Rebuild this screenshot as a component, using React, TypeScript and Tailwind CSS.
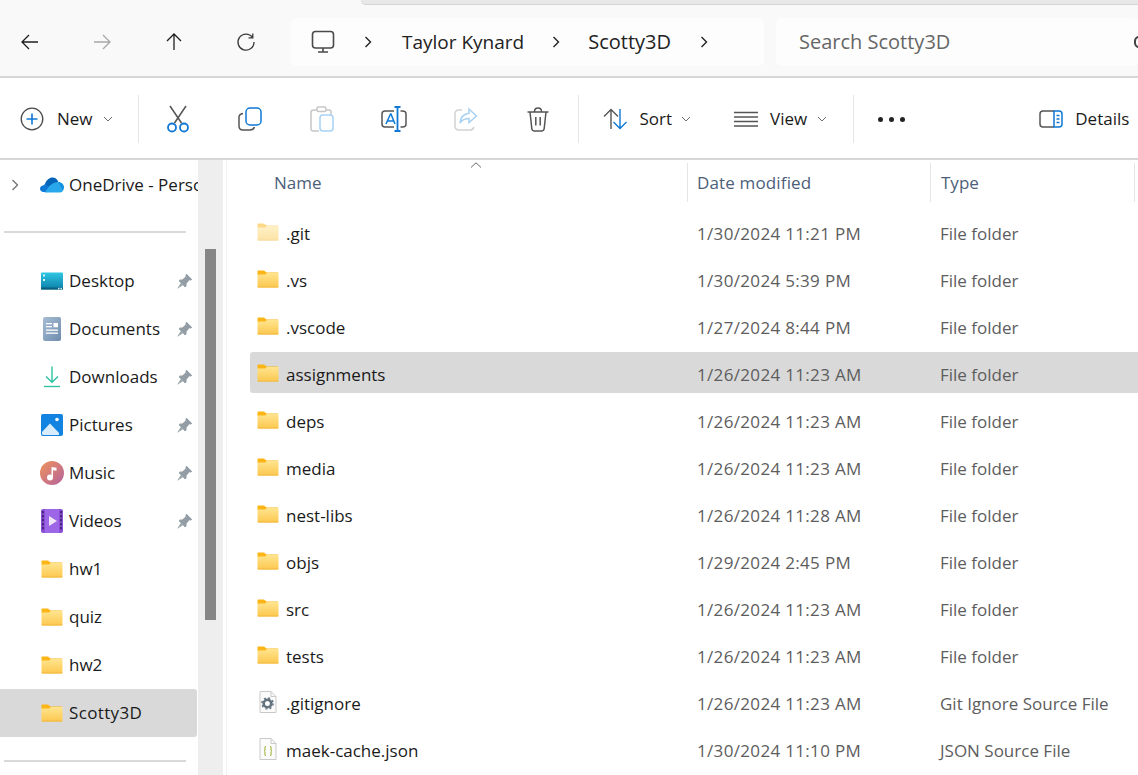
import { ReactNode } from "react";

const font = { fontFamily: '"Open Sans", "Noto Sans", sans-serif' };

const FolderIcon = ({ faded }: { faded?: boolean }) => (
  <svg width="22" height="18" viewBox="0 0 22 18" className={faded ? "shrink-0 opacity-50" : "shrink-0"}>
    <defs>
      <linearGradient id="folderBody" x1="0" y1="0" x2="0" y2="1">
        <stop offset="0" stopColor="#ffe48f" />
        <stop offset="1" stopColor="#fcc84f" />
      </linearGradient>
    </defs>
    <path d="M0.5 1.5C0.5 0.9 0.9 0.5 1.5 0.5H7L9.5 2.5H21V5H0.5Z" fill="#fbb516" />
    <path d="M0.5 4.5L8 4.5L10 3H21.5V16.5C21.5 17 21 17.5 20.5 17.5H1.5C1 17.5 0.5 17 0.5 16.5Z" fill="url(#folderBody)" />
    <path d="M0.5 16.5H21.5V17C21.5 17.3 21.2 17.5 21 17.5H1C0.8 17.5 0.5 17.3 0.5 17Z" fill="#f3b73e" />
  </svg>
);

const PinIcon = () => (
  <svg width="17" height="17" viewBox="0 0 17 17" className="shrink-0">
    <path d="M10.5 0.8L16.2 6.5L14.8 7.6L13.4 7.3L10.6 10.6L10.4 13.4L8.9 14.2L2.8 8.1L3.7 6.6L6.4 6.4L9.7 3.6L9.4 2.2Z" fill="#929da5" />
    <path d="M5 10L1 16L7 12Z" fill="#929da5" />
  </svg>
);

const DesktopIcon = () => (
  <svg width="22" height="18" viewBox="0 0 22 18">
    <defs>
      <linearGradient id="deskFill" x1="0" y1="0" x2="0" y2="1">
        <stop offset="0" stopColor="#2fc6e2" />
        <stop offset="1" stopColor="#0c7fa8" />
      </linearGradient>
    </defs>
    <rect x="0" y="0.5" width="22" height="17" rx="1" fill="url(#deskFill)" />
    <rect x="0" y="15.5" width="22" height="2" fill="#0b5f80" />
    <rect x="2" y="2.5" width="2" height="2" fill="#d6f6fb" />
    <rect x="2" y="7" width="2" height="2" fill="#d6f6fb" />
    <rect x="17" y="15.8" width="1.5" height="1.5" fill="#cfeef6" />
    <rect x="19.5" y="15.8" width="1.5" height="1.5" fill="#cfeef6" />
  </svg>
);

const DocumentsIcon = () => (
  <svg width="18" height="24" viewBox="0 0 18 24">
    <defs>
      <linearGradient id="docFill" x1="0" y1="0" x2="1" y2="1">
        <stop offset="0" stopColor="#a9bdd3" />
        <stop offset="1" stopColor="#6d8cae" />
      </linearGradient>
    </defs>
    <rect x="0" y="0" width="18" height="24" rx="2" fill="url(#docFill)" />
    <rect x="3" y="6" width="6" height="1.3" fill="#fff" />
    <rect x="3" y="9" width="6" height="1.3" fill="#fff" />
    <rect x="10.5" y="6" width="4.5" height="4.3" fill="#fff" />
    <rect x="3" y="12.5" width="12" height="1.3" fill="#fff" />
    <rect x="3" y="15.5" width="12" height="1.3" fill="#fff" />
  </svg>
);

const DownloadsIcon = () => (
  <svg width="18" height="22" viewBox="0 0 18 22" fill="none" stroke="#2fc3a2" strokeWidth="1.4">
    <path d="M9 0.5V16M3 10.5L9 16.3L15 10.5" />
    <path d="M1 20.5H17" />
  </svg>
);

const PicturesIcon = () => (
  <svg width="22" height="22" viewBox="0 0 22 22">
    <rect width="22" height="22" rx="2" fill="#1283e0" />
    <circle cx="16" cy="5.5" r="1.8" fill="#fff" />
    <path d="M1 20V18L9 9.5L18 19V21H2Z" fill="#d9ecfb" />
  </svg>
);

const MusicIcon = () => (
  <svg width="24" height="24" viewBox="0 0 24 24">
    <defs>
      <linearGradient id="musicFill" x1="0" y1="0" x2="1" y2="1">
        <stop offset="0" stopColor="#f0935a" />
        <stop offset="1" stopColor="#b4629e" />
      </linearGradient>
    </defs>
    <circle cx="12" cy="12" r="12" fill="url(#musicFill)" />
    <circle cx="10" cy="16.5" r="3" fill="#fff" />
    <path d="M11.5 16.5V6L16.5 6.8V9.8L13 9.3V16.5Z" fill="#fff" />
  </svg>
);

const VideosIcon = () => (
  <svg width="22" height="24" viewBox="0 0 22 24">
    <rect width="22" height="24" rx="2" fill="#8b4fd8" />
    <rect x="4" width="14" height="24" fill="#9d66e6" />
    {[2, 6, 10, 14, 18].map((y) => (
      <g key={y}>
        <rect x="1" y={y} width="2" height="2.4" fill="#44267a" />
        <rect x="19" y={y} width="2" height="2.4" fill="#44267a" />
      </g>
    ))}
    <path d="M8 7L16 12L8 17Z" fill="#efe6fb" />
  </svg>
);

const OneDriveIcon = () => (
  <svg width="24" height="16" viewBox="0 0 24 16">
    <path d="M9.5 9.5L14.5 15H3.5C1.5 15 0 13.5 0 11.8C0 10 1.3 8.7 3.2 8.5C3.8 8 5 6.5 6.5 6.8Z" fill="#0f78d4" />
    <path d="M5 7C6.3 3 9.5 0.5 12.5 0.5C15.5 0.5 17.5 2.4 18.3 5L13 8L9 9.5Z" fill="#0364b8" />
    <path d="M18.3 5C21.5 5 24 7.5 24 10.3C24 12 23.3 13.3 22.5 14L13 9Z" fill="#1490df" />
    <path d="M9 9.5C11 7 14.5 5 18.3 5.2L23 13.8C22.5 14.6 21.5 15.5 20 15.5H4.5C6 14 7.5 11.5 9 9.5Z" fill="#28a8ea" />
  </svg>
);

const GitignoreIcon = () => (
  <svg width="18" height="22" viewBox="0 0 18 22">
    <path d="M1 0.5H12L17 5.5V21.5H1Z" fill="#fbfbfb" stroke="#c9c9c9" />
    <path d="M12 0.5V5.5H17" fill="none" stroke="#c9c9c9" />
    <circle cx="8.5" cy="12.5" r="3.8" fill="none" stroke="#63727f" strokeWidth="2.6" />
    <circle cx="8.5" cy="12.5" r="5.6" fill="none" stroke="#63727f" strokeWidth="1.5" strokeDasharray="2 2.4" />
  </svg>
);

const JsonIcon = () => (
  <svg width="18" height="22" viewBox="0 0 18 22">
    <path d="M1 0.5H12L17 5.5V21.5H1Z" fill="#fbfbfb" stroke="#c9c9c9" />
    <path d="M12 0.5V5.5H17" fill="none" stroke="#c9c9c9" />
    <path d="M7 8.5C5.5 8.5 6 10 6 11.5C6 12.5 5.5 13 5 13C5.5 13 6 13.5 6 14.5C6 16 5.5 17.5 7 17.5" fill="none" stroke="#a9b84a" strokeWidth="1.2" />
    <path d="M11 8.5C12.5 8.5 12 10 12 11.5C12 12.5 12.5 13 13 13C12.5 13 12 13.5 12 14.5C12 16 12.5 17.5 11 17.5" fill="none" stroke="#a9b84a" strokeWidth="1.2" />
  </svg>
);

const Chevron = ({ className }: { className?: string }) => (
  <svg width="8" height="12" viewBox="0 0 8 12" fill="none" stroke="currentColor" strokeWidth="1.4" className={className}>
    <path d="M1.5 1L6.5 6L1.5 11" />
  </svg>
);

const SmallCaret = () => (
  <svg width="10" height="6" viewBox="0 0 10 6" fill="none" stroke="#6b6b6b" strokeWidth="1" className="shrink-0">
    <path d="M1 1L5 5L9 1" />
  </svg>
);

const NavIcon = ({ d, color }: { d: string; color: string }) => (
  <svg width="20" height="20" viewBox="0 0 20 20" fill="none" stroke={color} strokeWidth="1.3">
    <path d={d} />
  </svg>
);

const Slot = ({ children }: { children: ReactNode }) => (
  <div className="flex w-[72px] shrink-0 items-center justify-center">{children}</div>
);

const Divider = ({ className }: { className: string }) => <div className={`h-[48px] w-px shrink-0 bg-[#e5e5e5] ${className}`} />;

const quickAccess = [
  { name: "Desktop", icon: <DesktopIcon />, pinned: true },
  { name: "Documents", icon: <DocumentsIcon />, pinned: true },
  { name: "Downloads", icon: <DownloadsIcon />, pinned: true },
  { name: "Pictures", icon: <PicturesIcon />, pinned: true },
  { name: "Music", icon: <MusicIcon />, pinned: true },
  { name: "Videos", icon: <VideosIcon />, pinned: true },
  { name: "hw1", icon: <FolderIcon /> },
  { name: "quiz", icon: <FolderIcon /> },
  { name: "hw2", icon: <FolderIcon /> },
  { name: "Scotty3D", icon: <FolderIcon />, selected: true },
];

const files = [
  { name: ".git", date: "1/30/2024 11:21 PM", type: "File folder", icon: <FolderIcon faded /> },
  { name: ".vs", date: "1/30/2024 5:39 PM", type: "File folder", icon: <FolderIcon /> },
  { name: ".vscode", date: "1/27/2024 8:44 PM", type: "File folder", icon: <FolderIcon /> },
  { name: "assignments", date: "1/26/2024 11:23 AM", type: "File folder", icon: <FolderIcon />, selected: true },
  { name: "deps", date: "1/26/2024 11:23 AM", type: "File folder", icon: <FolderIcon /> },
  { name: "media", date: "1/26/2024 11:23 AM", type: "File folder", icon: <FolderIcon /> },
  { name: "nest-libs", date: "1/26/2024 11:28 AM", type: "File folder", icon: <FolderIcon /> },
  { name: "objs", date: "1/29/2024 2:45 PM", type: "File folder", icon: <FolderIcon /> },
  { name: "src", date: "1/26/2024 11:23 AM", type: "File folder", icon: <FolderIcon /> },
  { name: "tests", date: "1/26/2024 11:23 AM", type: "File folder", icon: <FolderIcon /> },
  { name: ".gitignore", date: "1/26/2024 11:23 AM", type: "Git Ignore Source File", icon: <GitignoreIcon /> },
  { name: "maek-cache.json", date: "1/30/2024 11:10 PM", type: "JSON Source File", icon: <JsonIcon /> },
];

const App = () => {
  return (
    <div style={font} className="relative flex h-[775px] w-[1138px] flex-col overflow-hidden bg-white text-[17px] text-[#1a1a1a]">
      {/* tab strip edge */}
      <div className="absolute left-[361px] top-0 h-[5px] w-[777px] rounded-bl-[6px] border-b border-[#d4d4d4] bg-[#e8e8e8]" />

      {/* address bar */}
      <div className="flex h-[78px] shrink-0 items-start border-b-2 border-[#d6d6d6] bg-[#f9f9f9] pt-[18px]">
        <div className="ml-[-6px] flex h-[48px] w-[288px] shrink-0">
          <Slot><NavIcon d="M18 10H2M9 3L2 10L9 17" color="#1f1f1f" /></Slot>
          <Slot><NavIcon d="M2 10H18M11 3L18 10L11 17" color="#a8a8a8" /></Slot>
          <Slot><NavIcon d="M10 18V2M3 9L10 2L17 9" color="#1f1f1f" /></Slot>
          <Slot><NavIcon d="M16.5 5.5A8 8 0 1 0 18 10M16.8 1.5V5.8H12.5" color="#3a3a3a" /></Slot>
        </div>
        <div className="ml-[9px] flex h-[48px] w-[473px] shrink-0 items-center rounded-[6px] bg-[#fdfdfd]">
          <svg width="24" height="24" viewBox="0 0 24 24" fill="none" stroke="#4a4a4a" strokeWidth="1.6" className="ml-[20px] shrink-0">
            <rect x="1.5" y="1.5" width="21" height="16.5" rx="3" />
            <path d="M12 18V22M7 22H17" />
          </svg>
          <Chevron className="ml-[29px] shrink-0 text-[#222]" />
          <span className="ml-[30px] text-[19px] text-[#222]">Taylor Kynard</span>
          <Chevron className="ml-[28px] shrink-0 text-[#222]" />
          <span className="ml-[28px] text-[20px] text-[#222]">Scotty3D</span>
          <Chevron className="ml-[29px] shrink-0 text-[#222]" />
        </div>
        <div className="ml-[12px] flex h-[48px] grow items-center overflow-hidden rounded-[6px] bg-[#fdfdfd] pl-[23px]">
          <span className="grow text-[20px] text-[#666]">Search Scotty3D</span>
          <div className="mr-[-6px] h-[12px] w-[10px] rounded-full border-2 border-[#444]" />
        </div>
      </div>

      {/* command bar */}
      <div className="flex h-[82px] shrink-0 items-center border-b-2 border-[#d6d6d6] bg-white pt-[2px]">
        <svg width="24" height="24" viewBox="0 0 24 24" fill="none" className="ml-[20px] shrink-0">
          <circle cx="12" cy="12" r="10.8" stroke="#4a4a4a" strokeWidth="1.3" />
          <path d="M12 6.5V17.5M6.5 12H17.5" stroke="#0f78d4" strokeWidth="1.6" />
        </svg>
        <span className="ml-[13px]">New</span>
        <div className="ml-[10px]"><SmallCaret /></div>
        <Divider className="ml-[25px]" />
        <div className="ml-[3px] flex">
          <Slot>
            <svg width="24" height="28" viewBox="0 0 24 28" fill="none" strokeWidth="1.5">
              <path d="M4 1L15.5 18M20 1L8.5 18" stroke="#555" />
              <circle cx="6" cy="22.5" r="4" stroke="#0f78d4" strokeWidth="1.8" />
              <circle cx="18" cy="22.5" r="4" stroke="#0f78d4" strokeWidth="1.8" />
            </svg>
          </Slot>
          <Slot>
            <svg width="24" height="24" viewBox="0 0 24 24" fill="none" strokeWidth="1.5">
              <path d="M5 6.5C2.5 7 1 8.2 1 10V19C1 21.5 2.5 23 5 23H12C14.5 23 16 21.5 16.5 20" stroke="#555" />
              <rect x="8" y="1" width="15" height="17" rx="4" stroke="#0f78d4" />
            </svg>
          </Slot>
          <Slot>
            <svg width="24" height="26" viewBox="0 0 24 26" fill="none" strokeWidth="1.5">
              <path d="M7 4H3.5C2 4 1 5 1 6.5V23C1 24.5 2 25 3.5 25H9" stroke="#c6c6c6" />
              <path d="M16 4H19C20.3 4 21 5 21 6V9" stroke="#c6c6c6" />
              <rect x="7" y="1" width="9" height="4.5" rx="1.5" stroke="#c6c6c6" />
              <rect x="10" y="9" width="13" height="16" rx="3" stroke="#a8d1f2" />
            </svg>
          </Slot>
          <Slot>
            <svg width="26" height="26" viewBox="0 0 26 26" fill="none" strokeWidth="1.5">
              <path d="M13 5H4C2 5 1 6.2 1 8V18C1 19.8 2 21 4 21H13" stroke="#555" />
              <path d="M19.5 5H21.5C23.6 5 25 6.2 25 8V18C25 19.8 23.6 21 21.5 21H19.5" stroke="#555" />
              <path d="M5 18L9.5 8H10L14 18M6.3 15H12.7" stroke="#0f78d4" />
              <path d="M16.5 1.5V24.5M13.5 1H19.5M13.5 25H19.5" stroke="#0f78d4" strokeWidth="1.8" />
            </svg>
          </Slot>
          <Slot>
            <svg width="24" height="24" viewBox="0 0 24 24" fill="none" strokeWidth="1.5">
              <path d="M8 3H5C2.5 3 1 4.5 1 7V19C1 21.5 2.5 23 5 23H16C18 23 19.5 21.5 19.8 20" stroke="#d2d2d2" />
              <path d="M15 2L22.5 9L15 15.5V11.5C11 11.5 8 13 6 16C6.5 11 9.5 6.8 15 6.2Z" stroke="#a8d1f2" />
            </svg>
          </Slot>
          <Slot>
            <svg width="22" height="25" viewBox="0 0 22 25" fill="none" stroke="#555" strokeWidth="1.5">
              <path d="M0.5 5H21.5M7.5 4.5C7.5 2.5 9 1 11 1C13 1 14.5 2.5 14.5 4.5" />
              <path d="M3 5L4.8 21.5C5 23 6 24 7.5 24H14.5C16 24 17 23 17.2 21.5L19 5" />
              <path d="M8.8 10V18.5M13.2 10V18.5" />
            </svg>
          </Slot>
        </div>
        <Divider className="ml-[4px]" />
        <svg width="26" height="22" viewBox="0 0 26 22" fill="none" strokeWidth="1.4" className="ml-[24px] shrink-0">
          <path d="M8 21V1.5M1 8.5L8 1.5L15 8.5" stroke="#555" />
          <path d="M17 1V20.5M10.5 14L17 20.5L23.5 14" stroke="#0f78d4" />
        </svg>
        <span className="ml-[11px]">Sort</span>
        <div className="ml-[9px]"><SmallCaret /></div>
        <svg width="24" height="16" viewBox="0 0 24 16" stroke="#555" strokeWidth="1.3" className="ml-[43px] shrink-0">
          <path d="M0 1.5H24M0 6H24M0 10.5H24M0 15H24" />
        </svg>
        <span className="ml-[12px]">View</span>
        <div className="ml-[10px]"><SmallCaret /></div>
        <Divider className="ml-[26px]" />
        <div className="ml-[24px] flex shrink-0 gap-[6px]">
          <div className="h-[5px] w-[5px] rounded-full bg-[#222]" />
          <div className="h-[5px] w-[5px] rounded-full bg-[#222]" />
          <div className="h-[5px] w-[5px] rounded-full bg-[#222]" />
        </div>
        <svg width="24" height="18" viewBox="0 0 24 18" fill="none" strokeWidth="1.5" className="ml-[134px] shrink-0">
          <path d="M15 1H4C2 1 1 2 1 4V14C1 16 2 17 4 17H15" stroke="#555" />
          <path d="M15 1H20C22 1 23 2 23 4V14C23 16 22 17 20 17H15Z" stroke="#0f78d4" />
          <path d="M17.5 5.5H20.5M17.5 9H20.5M17.5 12.5H20.5" stroke="#0f78d4" />
        </svg>
        <span className="ml-[12px] whitespace-nowrap">Details</span>
      </div>

      {/* body */}
      <div className="flex grow overflow-hidden">
        <aside className="flex w-[198px] shrink-0 flex-col overflow-hidden">
          <div className="flex h-[50px] shrink-0 items-center">
            <Chevron className="ml-[11px] shrink-0 text-[#777]" />
            <div className="ml-[21px] shrink-0"><OneDriveIcon /></div>
            <span className="ml-[5px] w-[129px] overflow-hidden whitespace-nowrap">OneDrive - Personal</span>
          </div>
          <div className="ml-[4px] mt-[21px] h-[2px] w-[182px] shrink-0 bg-[#d9d9d9]" />
          <div className="mt-[24px] flex w-[197px] flex-col">
            {quickAccess.map((item) => (
              <div key={item.name} className={`flex h-[48px] shrink-0 items-center rounded-r-[3px] ${item.selected ? "bg-[#d9d9d9]" : ""}`}>
                <div className="flex w-[64px] shrink-0 justify-center pl-[40px]">
                  <div className="flex w-[24px] justify-center">{item.icon}</div>
                </div>
                <span className={`ml-[5px] grow ${item.selected ? "tracking-[0.35px]" : ""}`}>{item.name}</span>
                {item.pinned && <div className="mr-[4px]"><PinIcon /></div>}
              </div>
            ))}
          </div>
          <div className="ml-[4px] mt-[23px] h-[2px] w-[182px] shrink-0 bg-[#d9d9d9]" />
        </aside>

        {/* nav scrollbar */}
        <div className="flex w-[25px] shrink-0 flex-col bg-[#eeeeee] pl-[7px] pt-[89px]">
          <div className="h-[371px] w-[11px] bg-[#868686]" />
        </div>

        <main className="ml-[3px] flex grow flex-col overflow-hidden border-l border-[#f2f2f2]">
          <div className="relative flex h-[42px] shrink-0 pt-[3px] text-[#4c607a]">
            <svg width="12" height="6" viewBox="0 0 12 6" fill="none" stroke="#666" className="absolute left-[243px] top-[2px]">
              <path d="M1 5.5L6 0.8L11 5.5" />
            </svg>
            <div className="flex w-[461px] items-center border-r border-[#e5e5e5] pl-[47px]">Name</div>
            <div className="flex w-[243px] items-center border-r border-[#e5e5e5] pl-[9px] tracking-[0.15px]">Date modified</div>
            <div className="flex w-[204px] items-center border-r border-[#e5e5e5] pl-[10px]">Type</div>
          </div>
          <div className="mt-[9px] flex flex-col">
            {files.map((file) => (
              <div key={file.name} className="h-[47px] shrink-0 pl-[23px]">
                <div className={`flex h-[41px] items-center rounded-l-[3px] ${file.selected ? "bg-[#d9d9d9]" : ""}`}>
                  <div className="flex w-[36px] shrink-0 justify-center">{file.icon}</div>
                  <span className="w-[411px] shrink-0 translate-y-[2px]">{file.name}</span>
                  <span className="w-[243px] shrink-0 translate-y-[2px] tracking-[0.33px] text-[#5d5d5d]">{file.date}</span>
                  <span className="translate-y-[2px] whitespace-nowrap text-[#5d5d5d]">{file.type}</span>
                </div>
              </div>
            ))}
          </div>
        </main>
      </div>
    </div>
  );
};

export default App;
